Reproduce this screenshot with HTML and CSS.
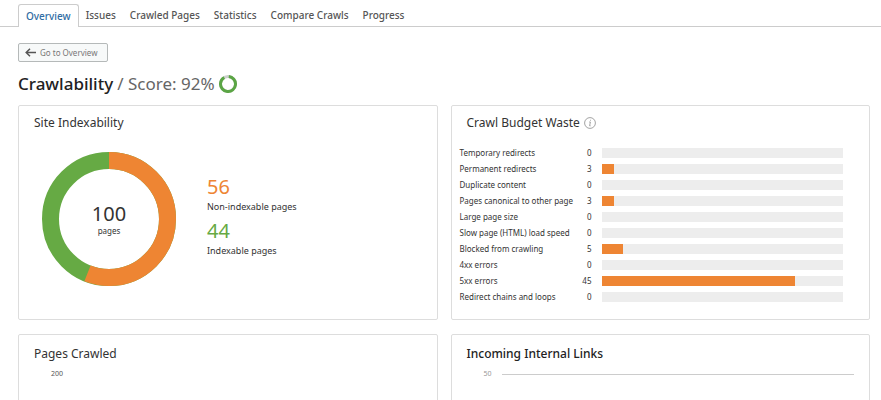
FILE: index.html
```html
<!DOCTYPE html>
<html lang="en">
<head>
  <meta charset="UTF-8">
  <meta name="viewport" content="width=device-width, initial-scale=1.0">
  <title>Crawlability</title>
  <link rel="stylesheet" href="styles.css">
</head>
<body>
  <nav class="tabs">
    <a class="tab active" href="#overview">Overview</a>
    <a class="tab" href="#issues">Issues</a>
    <a class="tab" href="#pages">Crawled Pages</a>
    <a class="tab" href="#statistics">Statistics</a>
    <a class="tab" href="#compare">Compare Crawls</a>
    <a class="tab" href="#progress">Progress</a>
  </nav>

  <main>
    <button class="back" type="button">
      <svg width="11" height="9" viewBox="0 0 11 9" fill="none" stroke="#555" stroke-width="1.5"><path d="M5 .8 1.2 4.5 5 8.2M1.2 4.5H11"/></svg>
      Go to Overview
    </button>

    <h1>
      Crawlability
      <span class="score">/ Score: 92%</span>
      <svg width="18" height="18" viewBox="0 0 18 18" fill="none" stroke-width="3">
        <circle cx="9" cy="9" r="7.5" stroke="#ccd0cc"/>
        <circle cx="9" cy="9" r="7.5" stroke="#5ba545" pathLength="100" stroke-dasharray="90 10" transform="rotate(-84 9 9)"/>
      </svg>
    </h1>

    <div class="cards">
      <section class="card">
        <h2>Site Indexability</h2>
        <div class="indexability">
          <div class="donut">
            <svg width="134" height="134" viewBox="0 0 134 134" fill="none" stroke-width="17">
              <circle cx="67" cy="67" r="58.5" stroke="#66aa44"/>
              <circle cx="67" cy="67" r="58.5" stroke="#ee8533" pathLength="100" stroke-dasharray="56 44" transform="rotate(-90 67 67)"/>
            </svg>
            <div class="donut-text"><b>100</b><span>pages</span></div>
          </div>
          <div class="legend">
            <b class="orange">56</b>
            <span>Non-indexable pages</span>
            <b class="green">44</b>
            <span>Indexable pages</span>
          </div>
        </div>
      </section>

      <section class="card">
        <h2>
          Crawl Budget Waste
          <svg width="12" height="12" viewBox="0 0 12 12" fill="none" stroke="#999"><circle cx="6" cy="6" r="5.4" stroke-width=".9"/><path d="M5.2 5H6.4L5.6 8.8H6.6M6.5 2.8V3.7" stroke-width=".9"/></svg>
        </h2>
        <table class="waste">
          <tbody>
            <tr><th scope="row">Temporary redirects</th><td>0</td><td class="bar"><div></div></td></tr>
            <tr><th scope="row">Permanent redirects</th><td>3</td><td class="bar"><div><i style="width: 5%"></i></div></td></tr>
            <tr><th scope="row">Duplicate content</th><td>0</td><td class="bar"><div></div></td></tr>
            <tr><th scope="row">Pages canonical to other page</th><td>3</td><td class="bar"><div><i style="width: 5%"></i></div></td></tr>
            <tr><th scope="row">Large page size</th><td>0</td><td class="bar"><div></div></td></tr>
            <tr><th scope="row">Slow page (HTML) load speed</th><td>0</td><td class="bar"><div></div></td></tr>
            <tr><th scope="row">Blocked from crawling</th><td>5</td><td class="bar"><div><i style="width: 9%"></i></div></td></tr>
            <tr><th scope="row">4xx errors</th><td>0</td><td class="bar"><div></div></td></tr>
            <tr><th scope="row">5xx errors</th><td>45</td><td class="bar"><div><i style="width: 80%"></i></div></td></tr>
            <tr><th scope="row">Redirect chains and loops</th><td>0</td><td class="bar"><div></div></td></tr>
          </tbody>
        </table>
      </section>

      <section class="card chart-card">
        <h2>Pages Crawled</h2>
        <div class="chart"><span class="tick dark">200</span></div>
      </section>

      <section class="card chart-card">
        <h2 class="strong">Incoming Internal Links</h2>
        <div class="chart"><span class="tick">50</span><span class="gridline"></span></div>
      </section>
    </div>
  </main>
</body>
</html>
```
FILE: styles.css
```css
* {
  box-sizing: border-box;
}
body {
  display: flex;
  flex-direction: column;
  margin: 0;
  height: 100vh;
  overflow: hidden;
  background: #fff;
  color: #333;
  font-family: "Noto Sans", "Open Sans", sans-serif;
  font-size: 9px;
}
.tabs {
  display: flex;
  flex: none;
  padding: 4px 18px 0;
  border-bottom: 1px solid #ccc;
}
.tab {
  padding: 0 7px;
  line-height: 22px;
  font-size: 10px;
  font-weight: 500;
  color: #555;
  text-decoration: none;
}
.tab.active {
  margin-bottom: -1px;
  border: 1px solid #ccc;
  border-bottom: none;
  border-radius: 3px 3px 0 0;
  background: #fff;
  color: #2f6ca3;
}
main {
  flex: 1;
  min-height: 0;
  padding: 16px 11px 0 18px;
  overflow: hidden;
}
.back {
  display: flex;
  align-items: center;
  gap: 4px;
  height: 19px;
  padding: 0 10px 0 6px;
  border: 1px solid #b5b9b9;
  border-radius: 2px;
  background: #f7f9f9;
  color: #777;
  font-family: inherit;
  font-size: 8px;
}
h1 {
  display: flex;
  align-items: center;
  gap: 4px;
  margin: 10px 0 9px;
  font-size: 17px;
  line-height: 24px;
  font-weight: 500;
  color: #222;
}
.score {
  font-weight: 400;
  color: #666;
}
.cards {
  display: grid;
  grid-template-columns: 1fr 1fr;
  gap: 14px 13px;
}
.card {
  min-height: 215px;
  border: 1px solid #ddd;
  border-radius: 2px;
}
h2 {
  display: flex;
  align-items: center;
  gap: 4px;
  margin: 7px 15px 0;
  font-size: 12px;
  line-height: 20px;
  font-weight: 400;
}
h2.strong {
  font-weight: 500;
  color: #222;
}
.indexability {
  display: flex;
  align-items: center;
  gap: 31px;
  margin: 19px 23px 0;
}
.donut {
  position: relative;
  height: 134px;
}
.donut-text {
  position: absolute;
  inset: 0;
  display: flex;
  flex-direction: column;
  align-items: center;
  justify-content: center;
  font-size: 8px;
  line-height: 10px;
}
.donut-text b {
  font-size: 20px;
  line-height: 24px;
  font-weight: 400;
}
.legend {
  display: grid;
}
.legend b {
  font-size: 20px;
  line-height: 24px;
  font-weight: 400;
}
.legend span {
  line-height: 16px;
  margin-bottom: 4px;
}
.orange {
  color: #ee8533;
}
.green {
  color: #66aa44;
}
.waste {
  width: 100%;
  margin-top: 12px;
  padding: 0 26px 0 8px;
  border-spacing: 0;
  font-size: 8px;
  line-height: 16px;
}
.waste th,
.waste td {
  padding: 0;
  height: 16px;
  text-align: left;
  font-weight: 400;
  white-space: nowrap;
}
.waste th {
  width: 117px;
}
.waste td {
  width: 15px;
  text-align: right;
}
.waste td.bar {
  width: auto;
  padding-left: 10px;
}
.bar div {
  height: 10px;
  background: #ededed;
}
.bar i {
  display: block;
  height: 100%;
  background: #ee8533;
}
.chart-card h2 {
  margin-top: 9px;
}
.chart {
  display: flex;
  align-items: center;
  gap: 10px;
  margin: 3px 15px 0 32px;
  line-height: 14px;
}
.tick {
  color: #999;
  font-size: 7px;
}
.tick.dark {
  color: #555;
}
.gridline {
  flex: 1;
  height: 1px;
  background: #ccc;
}
```
